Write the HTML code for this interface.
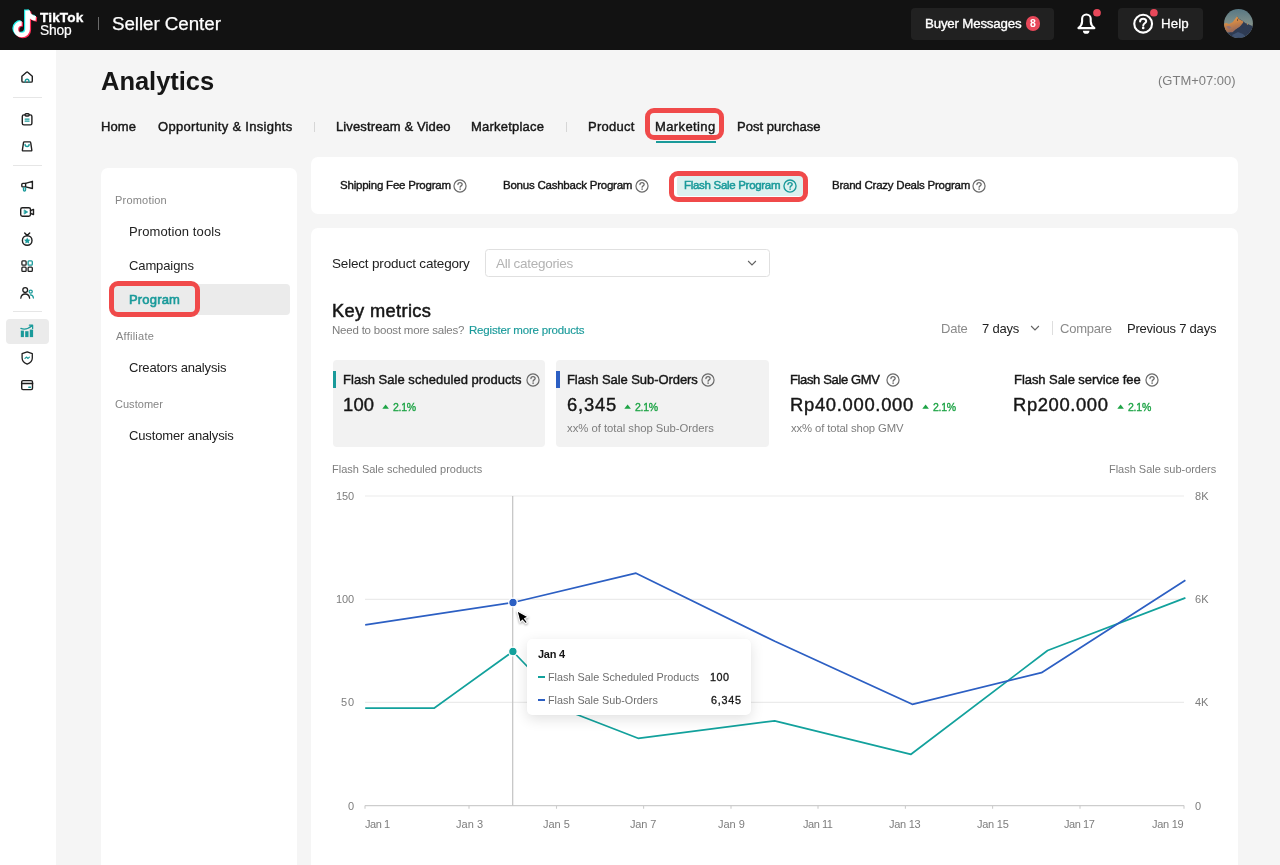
<!DOCTYPE html>
<html>
<head>
<meta charset="utf-8">
<title>Seller Center - Analytics</title>
<style>
*{box-sizing:border-box;margin:0;padding:0}
html,body{width:1280px;height:865px;overflow:hidden;background:#f5f5f5;font-family:"Liberation Sans",sans-serif;color:#161616}
.a{position:absolute}
.t{position:absolute;white-space:nowrap;line-height:1;will-change:transform}
.btn{position:absolute;background:#212121;border-radius:4px}
.red{position:absolute;border:5px solid #f04a4a;border-radius:9px}
.card{position:absolute;background:#fff;border-radius:7px}
</style>
</head>
<body>
<div class="a" style="left:0;top:0;width:1280px;height:50px;background:#121212"></div>
<svg class="a" style="left:12.2px;top:6.4px" width="32" height="36.27" viewBox="0 0 30 34"><g fill="none" stroke-width="4.4">
<path d="M14.6 4.2V21.7a5.5 5.5 0 1 1-5.5-5.5M14.6 4.2c.3 4 3.2 7 7.7 7.4" stroke="#25f4ee" transform="translate(-1.1,-.9)"/><path d="M14.6 4.2V21.7a5.5 5.5 0 1 1-5.5-5.5M14.6 4.2c.3 4 3.2 7 7.7 7.4" stroke="#fe2c55" transform="translate(1.1,.9)"/><path d="M14.6 4.2V21.7a5.5 5.5 0 1 1-5.5-5.5M14.6 4.2c.3 4 3.2 7 7.7 7.4" stroke="#fff"/></g></svg>
<div class="t" style="left:40.3px;top:10px;font-size:13.6px;line-height:15px;color:#fff;font-weight:bold;-webkit-text-stroke:0.35px #fff;letter-spacing:0.15px;">TikTok</div><div class="t" style="left:39.8px;top:23px;font-size:13.8px;line-height:15px;color:#fff;-webkit-text-stroke:0.2px #fff;letter-spacing:-0.22px;">Shop</div><div class="a" style="left:98px;top:16.8px;width:1px;height:13.2px;background:#6a6a6a"></div>
<div class="t" style="left:112.45px;top:13px;font-size:18.8px;line-height:21px;color:#fff;-webkit-text-stroke:0.25px #fff;letter-spacing:-0.06px;">Seller Center</div><div class="btn" style="left:911px;top:7.5px;width:143px;height:32px"></div>
<div class="t" style="left:925px;top:16px;font-size:13.3px;line-height:15px;color:#fff;-webkit-text-stroke:0.35px #fff;letter-spacing:-0.19px;">Buyer Messages</div><div class="a" style="left:1025.5px;top:16.4px;width:14.5px;height:14.5px;border-radius:7.25px;background:#e8485a"></div>
<div class="t" style="left:1029.88px;top:17px;font-size:10.5px;line-height:12px;color:#fff;font-weight:bold;">8</div><svg class="a" style="left:1070px;top:6px" width="36" height="34" viewBox="1070 6 36 34">
<path d="M1078.4 28.1C1080.9 26.2 1082.1 24.6 1082.1 21.6V18.8a4.3 4.3 0 0 1 8.6 0v2.8c0 3 1.2 4.6 3.7 6.5z" fill="none" stroke="#fff" stroke-width="2.1" stroke-linejoin="round"/>
<path d="M1082.9 30.7h6.6a3.3 3.1 0 0 1-6.6 0z" fill="#fff"/><circle cx="1097" cy="12.750" r="3.850" fill="#e8485a"/></svg>
<div class="btn" style="left:1118px;top:7.5px;width:85px;height:32px"></div>
<svg class="a" style="left:1130px;top:6px" width="32" height="32" viewBox="1130 6 32 32">
<circle cx="1143.150" cy="23.7" r="8.9" fill="none" stroke="#fff" stroke-width="2.1"/>
<path d="M1140.1 21.4c0-1.7 1.3-2.7 3.050-2.7s3.050 1 3.050 2.5c0 2.1-2.950 2.1-2.950 4.2" fill="none" stroke="#fff" stroke-width="2" stroke-linecap="round"/>
<circle cx="1143.2" cy="27.9" r="1.3" fill="#fff"/><circle cx="1153.9" cy="12.750" r="3.850" fill="#e8485a"/></svg>
<div class="t" style="left:1161px;top:16px;font-size:13.3px;line-height:15px;color:#fff;-webkit-text-stroke:0.3px #fff;letter-spacing:0.1px;">Help</div><svg class="a" style="left:1224.1px;top:8.9px" width="29" height="29" viewBox="0 0 29 29">
<defs><clipPath id="av"><circle cx="14.5" cy="14.5" r="14.4"/></clipPath>
<linearGradient id="sky" x1="0" y1="0" x2="0" y2="1"><stop offset="0" stop-color="#587884"/><stop offset=".55" stop-color="#83928b"/><stop offset="1" stop-color="#83928b"/></linearGradient>
<linearGradient id="mo" x1="0" y1="0" x2=".3" y2="1"><stop offset="0" stop-color="#f0a64e"/><stop offset=".5" stop-color="#cf8646"/><stop offset="1" stop-color="#94685c"/></linearGradient>
<filter id="bl" x="-10%" y="-10%" width="120%" height="120%"><feGaussianBlur stdDeviation=".45"/></filter></defs>
<g clip-path="url(#av)"><rect width="29" height="29" fill="url(#sky)"/><g filter="url(#bl)">
<path d="M12 10 13.1 7.3 15 9.8 18.8 11.9 21.5 14.2 23.4 14.8 26 16 29 17.2V29H3z" fill="#2e3a52"/>
<path d="M0 14.8 2.2 13.9 5 15 8.6 13.3 13.1 7.3 14.6 9.7 17 11.2 18.8 11.9 19.3 13.6 15.6 18 11.5 20.8 8.5 23.4 3 23.4 0 19z" fill="url(#mo)"/>
<path d="M13.5 9.6 14.2 10.2 13.9 12 13 11.8z" fill="#6b4630"/>
<path d="M23 14.4 23.9 14.5 23.7 16 22.9 15.6z" fill="#d99a5c"/>
<path d="M3 23.4 8.5 23.4 11.5 20.8 15.6 18 17.5 17 20 19 23 22 26 26 20 29H8z" fill="#2e3a52"/>
<path d="M8 26 14 23 19 25 22 28 10 29z" fill="#3f5272"/>
<path d="M2 17.5 5 17 7.5 18.5 5 20z" fill="#8d7078"/></g></g></svg>
<div class="a" style="left:0;top:50px;width:56px;height:815px;background:#fff"></div>
<svg class="a" style="left:19.3px;top:69px" width="16" height="16" viewBox="0 0 16 16" fill="none" stroke="#1f1f1f" stroke-width="1.4" stroke-linejoin="round" stroke-linecap="round"><path d="M2.9 7.3 7.5 3.3Q8.1 2.8 8.7 3.3l4.6 4v4.6q0 1.2-1.2 1.2H4.1q-1.2 0-1.2-1.2z"/><path d="M6.3 13.1v-1a1.8 1.8 0 0 1 3.6 0v1" stroke="#1a9a9a"/></svg>
<div class="a" style="left:13px;top:97.3px;width:29px;height:1px;background:#e6e6e6"></div>
<svg class="a" style="left:19.3px;top:112px" width="16" height="16" viewBox="0 0 16 16" fill="none" stroke="#1f1f1f" stroke-width="1.4" stroke-linejoin="round" stroke-linecap="round"><rect x="3.3" y="2.9" width="9.6" height="10" rx="1.6"/><rect x="6.1" y="1.7" width="4" height="2.3" rx=".9" fill="#fff"/><path d="M6.1 7h4M6.1 9.1h4" stroke="#1a9a9a" stroke-width="1.250"/></svg>
<svg class="a" style="left:19.3px;top:138px" width="16" height="16" viewBox="0 0 16 16" fill="none" stroke="#1f1f1f" stroke-width="1.4" stroke-linejoin="round" stroke-linecap="round"><path d="M5.4 3.9h5.4q.8 0 .9.8l1.1 7.3q.1.9-.8.9H4.2q-.9 0-.8-.9l1.1-7.3q.1-.8.9-.8z"/><path d="M6.1 6.5a2 2 0 0 0 4 0" stroke="#1a9a9a"/></svg>
<div class="a" style="left:13px;top:165px;width:29px;height:1px;background:#e6e6e6"></div>
<svg class="a" style="left:19.3px;top:177.5px" width="16" height="16" viewBox="0 0 16 16" fill="none" stroke="#1f1f1f" stroke-width="1.4" stroke-linejoin="round" stroke-linecap="round"><path d="M6.6 5.4l6.8-2.1v7.2L6.6 8.9z"/><path d="M6.6 5.4H3.8a1 1 0 0 0-1 1v1.5a1 1 0 0 0 1 1h2.8"/><path d="M4.5 9.7v2.4a1 1 0 0 0 2 0V9.7" stroke="#1a9a9a"/></svg>
<svg class="a" style="left:19.3px;top:204.1px" width="16" height="16" viewBox="0 0 16 16" fill="none" stroke="#1f1f1f" stroke-width="1.4" stroke-linejoin="round" stroke-linecap="round"><rect x="1.7" y="3.8" width="9.8" height="8.4" rx="1.7"/><path d="M11.5 6.7l3-1.3v5.2l-3-1.3"/><path d="M5.5 6.1 8.7 8l-3.2 1.9z" fill="#1a9a9a" stroke="#1a9a9a" stroke-width=".7"/></svg>
<svg class="a" style="left:19.3px;top:230.7px" width="16" height="16" viewBox="0 0 16 16" fill="none" stroke="#1f1f1f" stroke-width="1.4" stroke-linejoin="round" stroke-linecap="round"><circle cx="8.2" cy="9.5" r="4.8"/><path d="M5.7 1.9 8.2 4.6l2.5-2.7"/><path d="M8.2 6.5l1 2 2.2.3-1.6 1.550.4 2.2-2-1.050-2 1.050.4-2.2L5 8.8l2.2-.3z" fill="#1a9a9a" stroke="none"/></svg>
<svg class="a" style="left:19.3px;top:257.9px" width="16" height="16" viewBox="0 0 16 16" fill="none" stroke="#1f1f1f" stroke-width="1.3" stroke-linejoin="round" stroke-linecap="round"><rect x="2.9" y="2.9" width="4.2" height="4.2" rx=".9"/><rect x="9.1" y="2.9" width="4.2" height="4.2" rx=".9" stroke="#1a9a9a"/><rect x="2.9" y="9.1" width="4.2" height="4.2" rx=".9"/><rect x="9.1" y="9.1" width="4.2" height="4.2" rx=".9"/></svg>
<svg class="a" style="left:19.3px;top:284.5px" width="16" height="16" viewBox="0 0 16 16" fill="none" stroke="#1f1f1f" stroke-width="1.3" stroke-linejoin="round" stroke-linecap="round"><circle cx="6.2" cy="5.1" r="2.4"/><path d="M1.8 13.2c.3-2.8 2-4.2 4.4-4.2s4.1 1.4 4.4 4.2"/><circle cx="11.7" cy="6.6" r="1.6" stroke="#1a9a9a" stroke-width="1.250"/><path d="M11.3 9.9c1.7-.1 2.9 1 3.1 3.1" stroke="#1a9a9a" stroke-width="1.250"/></svg>
<div class="a" style="left:13px;top:311px;width:29px;height:1px;background:#e6e6e6"></div>
<div class="a" style="left:6px;top:319.1px;width:43px;height:24.6px;border-radius:4px;background:#ebebeb"></div>
<svg class="a" style="left:19.3px;top:323.3px" width="16" height="16" viewBox="0 0 16 16"><g fill="#1a9a9a"><rect x="1.8" y="7.6" width="3.1" height="6.5"/><rect x="6.2" y="8.2" width="3.3" height="5.9"/><rect x="10.8" y="6.6" width="3.3" height="7.5"/></g><path d="M1.9 5.4C5.5 7 9.5 5.8 13.2 2.5M10.4 2.2h3.2v3.2" fill="none" stroke="#1a9a9a" stroke-width="1.3" stroke-linecap="round" stroke-linejoin="round"/></svg>
<svg class="a" style="left:19.3px;top:350px" width="16" height="16" viewBox="0 0 16 16" fill="none" stroke="#1f1f1f" stroke-width="1.3" stroke-linejoin="round" stroke-linecap="round"><path d="M8.2 1.9l5.1 1.7v4.5c0 3-2.2 4.9-5.1 6.1-2.9-1.2-5.1-3.1-5.1-6.1V3.6z"/><path d="M6 8.4 7.4 7.1l1.6 1.3 1.4-1.3" stroke="#1a9a9a" stroke-width="1.250"/></svg>
<svg class="a" style="left:19.3px;top:377px" width="16" height="16" viewBox="0 0 16 16" fill="none" stroke="#1f1f1f" stroke-width="1.4" stroke-linejoin="round" stroke-linecap="round"><rect x="2.7" y="3.6" width="10.8" height="9" rx="1.3"/><path d="M2.7 6.5h10.8" stroke-width="1.7"/><path d="M9.8 10.3h1.7" stroke="#1a9a9a" stroke-width="1.4"/></svg>
<div class="t" style="left:101px;top:67px;font-size:25.5px;line-height:28px;color:#161616;font-weight:bold;letter-spacing:-0.03px;">Analytics</div><div class="t" style="left:1158px;top:73px;font-size:13px;line-height:15px;color:#7d7d7d;">(GTM+07:00)</div><div class="t" style="left:101px;top:119px;font-size:13px;line-height:15px;color:#161616;-webkit-text-stroke:0.42px #161616;letter-spacing:0.08px;">Home</div><div class="t" style="left:157.75px;top:119px;font-size:13px;line-height:15px;color:#161616;-webkit-text-stroke:0.42px #161616;letter-spacing:0.3px;">Opportunity &amp; Insights</div><div class="a" style="left:314px;top:122px;width:1px;height:10px;background:#d6d6d6"></div>
<div class="t" style="left:335.75px;top:119px;font-size:13px;line-height:15px;color:#161616;-webkit-text-stroke:0.42px #161616;letter-spacing:0.12px;">Livestream &amp; Video</div><div class="t" style="left:471.25px;top:119px;font-size:13px;line-height:15px;color:#161616;-webkit-text-stroke:0.42px #161616;letter-spacing:0.22px;">Marketplace</div><div class="a" style="left:566px;top:122px;width:1px;height:10px;background:#d6d6d6"></div>
<div class="t" style="left:587.75px;top:119px;font-size:13px;line-height:15px;color:#161616;-webkit-text-stroke:0.42px #161616;letter-spacing:0.27px;">Product</div><div class="t" style="left:655.45px;top:119px;font-size:13px;line-height:15px;color:#161616;-webkit-text-stroke:0.42px #161616;letter-spacing:0.38px;">Marketing</div><div class="t" style="left:736.85px;top:119px;font-size:13px;line-height:15px;color:#161616;-webkit-text-stroke:0.42px #161616;letter-spacing:0.03px;">Post purchase</div><div class="a" style="left:656px;top:141px;width:60px;height:2px;background:#1a9a9a"></div>
<div class="red" style="left:644.9px;top:108.2px;width:79.1px;height:31.5px"></div>
<div class="card" style="left:101.3px;top:167.7px;width:196px;height:720px"></div>
<div class="t" style="left:114.6px;top:194px;font-size:11px;line-height:12px;color:#858585;letter-spacing:0.2px;">Promotion</div><div class="t" style="left:129px;top:224px;font-size:13px;line-height:15px;color:#222;letter-spacing:0.1px;">Promotion tools</div><div class="t" style="left:129.25px;top:258px;font-size:13px;line-height:15px;color:#222;letter-spacing:-0.11px;">Campaigns</div><div class="a" style="left:110px;top:283.7px;width:180px;height:31.5px;border-radius:4px;background:#ebebeb"></div>
<div class="t" style="left:129.05px;top:292px;font-size:13px;line-height:15px;color:#1a9a9a;-webkit-text-stroke:0.6px #1a9a9a;letter-spacing:0.18px;">Program</div><div class="red" style="left:109.3px;top:281px;width:90.5px;height:35.5px"></div>
<div class="t" style="left:115.6px;top:330px;font-size:11px;line-height:12px;color:#858585;letter-spacing:0.24px;">Affiliate</div><div class="t" style="left:129.25px;top:360px;font-size:13px;line-height:15px;color:#222;letter-spacing:-0.19px;">Creators analysis</div><div class="t" style="left:115.1px;top:398px;font-size:11px;line-height:12px;color:#858585;letter-spacing:0.03px;">Customer</div><div class="t" style="left:129.25px;top:428px;font-size:13px;line-height:15px;color:#222;letter-spacing:-0.13px;">Customer analysis</div><div class="card" style="left:311.3px;top:156.5px;width:926.5px;height:57.6px"></div>
<div class="t" style="left:339.75px;top:179px;font-size:11.5px;line-height:12px;color:#161616;-webkit-text-stroke:0.38px #161616;letter-spacing:-0.21px;">Shipping Fee Program</div><svg class="a" style="left:452.1px;top:177.5px" width="16" height="16" viewBox="0 0 16 16" fill="none" stroke="#6a6a6a" stroke-width="1.2" stroke-linecap="round"><circle cx="8" cy="8" r="6.05"/><path d="M5.950 6.6c0-1.2.9-2 2.1-2s2.1.75 2.1 1.9c0 1.4-2.050 1.4-2.050 2.7" stroke-width="1.30"/><circle cx="8.1" cy="11.150" r=".8" fill="#6a6a6a" stroke="none"/></svg>
<div class="t" style="left:502.5px;top:179px;font-size:11.5px;line-height:12px;color:#161616;-webkit-text-stroke:0.38px #161616;letter-spacing:-0.23px;">Bonus Cashback Program</div><svg class="a" style="left:633.8px;top:177.5px" width="16" height="16" viewBox="0 0 16 16" fill="none" stroke="#6a6a6a" stroke-width="1.2" stroke-linecap="round"><circle cx="8" cy="8" r="6.05"/><path d="M5.950 6.6c0-1.2.9-2 2.1-2s2.1.75 2.1 1.9c0 1.4-2.050 1.4-2.050 2.7" stroke-width="1.30"/><circle cx="8.1" cy="11.150" r=".8" fill="#6a6a6a" stroke="none"/></svg>
<div class="a" style="left:676.5px;top:175.7px;width:126.5px;height:20.8px;background:#dcf1ef;border-radius:3px"></div>
<div class="t" style="left:683.95px;top:179px;font-size:11.5px;line-height:12px;color:#1a9a9a;-webkit-text-stroke:0.5px #1a9a9a;letter-spacing:-0.3px;">Flash Sale Program</div><svg class="a" style="left:781.5px;top:177.5px" width="16" height="16" viewBox="0 0 16 16" fill="none" stroke="#1a9a9a" stroke-width="1.35" stroke-linecap="round"><circle cx="8" cy="8" r="6.05"/><path d="M5.950 6.6c0-1.2.9-2 2.1-2s2.1.75 2.1 1.9c0 1.4-2.050 1.4-2.050 2.7" stroke-width="1.45"/><circle cx="8.1" cy="11.150" r=".8" fill="#1a9a9a" stroke="none"/></svg>
<div class="red" style="left:669.4px;top:170.7px;width:138.4px;height:30.9px"></div>
<div class="t" style="left:831.85px;top:179px;font-size:11.5px;line-height:12px;color:#161616;-webkit-text-stroke:0.38px #161616;letter-spacing:-0.23px;">Brand Crazy Deals Program</div><svg class="a" style="left:971.4px;top:177.5px" width="16" height="16" viewBox="0 0 16 16" fill="none" stroke="#6a6a6a" stroke-width="1.2" stroke-linecap="round"><circle cx="8" cy="8" r="6.05"/><path d="M5.950 6.6c0-1.2.9-2 2.1-2s2.1.75 2.1 1.9c0 1.4-2.050 1.4-2.050 2.7" stroke-width="1.30"/><circle cx="8.1" cy="11.150" r=".8" fill="#6a6a6a" stroke="none"/></svg>
<div class="card" style="left:311.3px;top:227.6px;width:926.5px;height:660px"></div>
<div class="t" style="left:332.25px;top:256px;font-size:13.5px;line-height:15px;color:#222;letter-spacing:-0.18px;">Select product category</div><div class="a" style="left:485px;top:249px;width:285px;height:28px;border:1px solid #e0e0e0;border-radius:3.5px;background:#fff"></div>
<div class="t" style="left:496.25px;top:256px;font-size:13.5px;line-height:15px;color:#b3b3b3;letter-spacing:-0.29px;">All categories</div><svg class="a" style="left:746.2px;top:259px" width="12" height="8" viewBox="0 0 12 8" fill="none" stroke="#636363" stroke-width="1.15" stroke-linejoin="miter"><path d="M2.1 2 6 5.9 9.9 2"/></svg>
<div class="t" style="left:332px;top:300px;font-size:18.3px;line-height:21px;color:#161616;-webkit-text-stroke:0.5px #161616;letter-spacing:0.35px;">Key metrics</div><div class="t" style="left:332px;top:324px;font-size:11.5px;line-height:12px;color:#7d7d7d;letter-spacing:-0.21px;">Need to boost more sales?</div><div class="t" style="left:468.5px;top:324px;font-size:11.5px;line-height:12px;color:#1a9a9a;-webkit-text-stroke:0.15px #1a9a9a;letter-spacing:-0.19px;">Register more products</div><div class="t" style="left:940.7px;top:321px;font-size:13px;line-height:15px;color:#8a8a8a;letter-spacing:-0.23px;">Date</div><div class="t" style="left:982.45px;top:321px;font-size:13px;line-height:15px;color:#222;letter-spacing:-0.22px;">7 days</div><svg class="a" style="left:1028.9px;top:324.4px" width="12" height="8" viewBox="0 0 12 8" fill="none" stroke="#636363" stroke-width="1.15" stroke-linejoin="miter"><path d="M2.1 2 6 5.9 9.9 2"/></svg>
<div class="a" style="left:1051.8px;top:320.5px;width:1px;height:14px;background:#dedede"></div>
<div class="t" style="left:1060.05px;top:321px;font-size:13px;line-height:15px;color:#8a8a8a;letter-spacing:-0.24px;">Compare</div><div class="t" style="left:1126.6px;top:321px;font-size:13px;line-height:15px;color:#222;letter-spacing:-0.22px;">Previous 7 days</div><div class="a" style="left:332.7px;top:360px;width:212.8px;height:87.2px;background:#f2f2f2;border-radius:4px"></div>
<div class="a" style="left:556px;top:360px;width:213px;height:87.2px;background:#f2f2f2;border-radius:4px"></div>
<div class="a" style="left:332.7px;top:371px;width:3.6px;height:17px;background:#1a9a9a"></div>
<div class="a" style="left:556.1px;top:371px;width:3.7px;height:17px;background:#2c5fc3"></div>
<div class="t" style="left:343px;top:372px;font-size:13px;line-height:15px;color:#161616;-webkit-text-stroke:0.42px #161616;letter-spacing:0.03px;">Flash Sale scheduled products</div><svg class="a" style="left:524.8px;top:372.1px" width="16" height="16" viewBox="0 0 16 16" fill="none" stroke="#6a6a6a" stroke-width="1.2" stroke-linecap="round"><circle cx="8" cy="8" r="6.05"/><path d="M5.950 6.6c0-1.2.9-2 2.1-2s2.1.75 2.1 1.9c0 1.4-2.050 1.4-2.050 2.7" stroke-width="1.30"/><circle cx="8.1" cy="11.150" r=".8" fill="#6a6a6a" stroke="none"/></svg>
<div class="t" style="left:342.85px;top:394px;font-size:18.4px;line-height:21px;color:#161616;-webkit-text-stroke:0.4px #161616;letter-spacing:0.2px;">100</div><svg class="a" style="left:382px;top:404.1px" width="8" height="6" viewBox="0 0 8 6"><path d="M.3 4.8 3.6.5 6.9 4.8z" fill="#1ea446"/></svg>
<div class="t" style="left:393px;top:401px;font-size:10.5px;line-height:12px;color:#1ea446;-webkit-text-stroke:0.35px #1ea446;letter-spacing:-0.28px;">2.1%</div><div class="t" style="left:566.85px;top:372px;font-size:13px;line-height:15px;color:#161616;-webkit-text-stroke:0.42px #161616;letter-spacing:-0.07px;">Flash Sale Sub-Orders</div><svg class="a" style="left:700.2px;top:372.1px" width="16" height="16" viewBox="0 0 16 16" fill="none" stroke="#6a6a6a" stroke-width="1.2" stroke-linecap="round"><circle cx="8" cy="8" r="6.05"/><path d="M5.950 6.6c0-1.2.9-2 2.1-2s2.1.75 2.1 1.9c0 1.4-2.050 1.4-2.050 2.7" stroke-width="1.30"/><circle cx="8.1" cy="11.150" r=".8" fill="#6a6a6a" stroke="none"/></svg>
<div class="t" style="left:566.85px;top:394px;font-size:18.4px;line-height:21px;color:#161616;-webkit-text-stroke:0.4px #161616;letter-spacing:0.8px;">6,345</div><svg class="a" style="left:624.2px;top:404.1px" width="8" height="6" viewBox="0 0 8 6"><path d="M.3 4.8 3.6.5 6.9 4.8z" fill="#1ea446"/></svg>
<div class="t" style="left:635.25px;top:401px;font-size:10.5px;line-height:12px;color:#1ea446;-webkit-text-stroke:0.35px #1ea446;letter-spacing:-0.27px;">2.1%</div><div class="t" style="left:567.05px;top:422px;font-size:11.3px;line-height:12px;color:#7d7d7d;letter-spacing:-0.02px;">xx% of total shop Sub-Orders</div><div class="t" style="left:790.45px;top:372px;font-size:13px;line-height:15px;color:#161616;-webkit-text-stroke:0.42px #161616;letter-spacing:-0.36px;">Flash Sale GMV</div><svg class="a" style="left:884.6px;top:372.1px" width="16" height="16" viewBox="0 0 16 16" fill="none" stroke="#6a6a6a" stroke-width="1.2" stroke-linecap="round"><circle cx="8" cy="8" r="6.05"/><path d="M5.950 6.6c0-1.2.9-2 2.1-2s2.1.75 2.1 1.9c0 1.4-2.050 1.4-2.050 2.7" stroke-width="1.30"/><circle cx="8.1" cy="11.150" r=".8" fill="#6a6a6a" stroke="none"/></svg>
<div class="t" style="left:789.95px;top:394px;font-size:18.4px;line-height:21px;color:#161616;-webkit-text-stroke:0.4px #161616;letter-spacing:0.7px;">Rp40.000.000</div><svg class="a" style="left:921.6px;top:404.1px" width="8" height="6" viewBox="0 0 8 6"><path d="M.3 4.8 3.6.5 6.9 4.8z" fill="#1ea446"/></svg>
<div class="t" style="left:932.75px;top:401px;font-size:10.5px;line-height:12px;color:#1ea446;-webkit-text-stroke:0.35px #1ea446;letter-spacing:-0.27px;">2.1%</div><div class="t" style="left:790.95px;top:422px;font-size:11.3px;line-height:12px;color:#7d7d7d;letter-spacing:-0.12px;">xx% of total shop GMV</div><div class="t" style="left:1013.95px;top:372px;font-size:13px;line-height:15px;color:#161616;-webkit-text-stroke:0.42px #161616;letter-spacing:-0.06px;">Flash Sale service fee</div><svg class="a" style="left:1144px;top:372.1px" width="16" height="16" viewBox="0 0 16 16" fill="none" stroke="#6a6a6a" stroke-width="1.2" stroke-linecap="round"><circle cx="8" cy="8" r="6.05"/><path d="M5.950 6.6c0-1.2.9-2 2.1-2s2.1.75 2.1 1.9c0 1.4-2.050 1.4-2.050 2.7" stroke-width="1.30"/><circle cx="8.1" cy="11.150" r=".8" fill="#6a6a6a" stroke="none"/></svg>
<div class="t" style="left:1013.45px;top:394px;font-size:18.4px;line-height:21px;color:#161616;-webkit-text-stroke:0.4px #161616;letter-spacing:0.61px;">Rp200.000</div><svg class="a" style="left:1116.6px;top:404.1px" width="8" height="6" viewBox="0 0 8 6"><path d="M.3 4.8 3.6.5 6.9 4.8z" fill="#1ea446"/></svg>
<div class="t" style="left:1127.75px;top:401px;font-size:10.5px;line-height:12px;color:#1ea446;-webkit-text-stroke:0.35px #1ea446;letter-spacing:-0.23px;">2.1%</div><div class="t" style="left:332px;top:463px;font-size:11px;line-height:12px;color:#7d7d7d;letter-spacing:-0.01px;">Flash Sale scheduled products</div><div class="t" style="left:1109.4px;top:463px;font-size:11px;line-height:12px;color:#7d7d7d;letter-spacing:-0.02px;">Flash Sale sub-orders</div><svg class="a" style="left:0;top:440px" width="1280" height="425" viewBox="0 440 1280 425" fill="none">
<path d="M365 496H1184" stroke="#ebebeb" stroke-width="1.2"/>
<path d="M365 599.3H1184" stroke="#ebebeb" stroke-width="1.2"/>
<path d="M365 702.4H1184" stroke="#ebebeb" stroke-width="1.2"/>
<path d="M365 805.6H1184" stroke="#cdcdcd" stroke-width="1.2"/>
<path d="M365 805.6v3.2M469 805.6v3.2M556.5 805.6v3.2M643.6 805.6v3.2M731 805.6v3.2M818 805.6v3.2M905.4 805.6v3.2M992.6 805.6v3.2M1080 805.6v3.2M1184 805.6v3.2" stroke="#cdcdcd" stroke-width="1.1"/>
<path d="M512.7 496V805.6" stroke="#c2c2c2" stroke-width="1.2"/>
<path d="M365.2 708.2L434 708.2L512.9 651.5L571.6 712.5L638.1 738.3L774.7 720.8L911 754.3L1047.6 650.5L1185.4 597.9" stroke="#12a19c" stroke-width="1.7" stroke-linejoin="round"/>
<path d="M365.2 624.9L513 602.5L636 573.2L774.8 641.3L912.3 704.3L1041.5 672.7L1185.4 580.2" stroke="#2c5fc3" stroke-width="1.7" stroke-linejoin="round"/>
<circle cx="513" cy="602.5" r="4.3" fill="#2c5fc3" stroke="#fff" stroke-width="1.3"/>
<circle cx="512.9" cy="651.5" r="4.3" fill="#12a19c" stroke="#fff" stroke-width="1.3"/>
</svg>
<div class="t" style="left:336.25px;top:490px;font-size:11px;line-height:12px;color:#7d7d7d;letter-spacing:-0.18px;">150</div><div class="t" style="left:336.25px;top:593px;font-size:11px;line-height:12px;color:#7d7d7d;letter-spacing:-0.18px;">100</div><div class="t" style="left:341.35px;top:696px;font-size:11px;line-height:12px;color:#7d7d7d;letter-spacing:0.8px;">50</div><div class="t" style="left:347.72px;top:800px;font-size:11px;line-height:12px;color:#7d7d7d;">0</div><div class="t" style="left:1194.7px;top:490px;font-size:11px;line-height:12px;color:#7d7d7d;letter-spacing:0.05px;">8K</div><div class="t" style="left:1194.7px;top:593px;font-size:11px;line-height:12px;color:#7d7d7d;letter-spacing:0.05px;">6K</div><div class="t" style="left:1194.95px;top:696px;font-size:11px;line-height:12px;color:#7d7d7d;letter-spacing:-0.2px;">4K</div><div class="t" style="left:1195.12px;top:800px;font-size:11px;line-height:12px;color:#7d7d7d;">0</div><div class="t" style="left:364.75px;top:818px;font-size:11px;line-height:12px;color:#7d7d7d;letter-spacing:-0.44px;">Jan 1</div><div class="t" style="left:455.55px;top:818px;font-size:11px;line-height:12px;color:#7d7d7d;letter-spacing:0.06px;">Jan 3</div><div class="t" style="left:542.75px;top:818px;font-size:11px;line-height:12px;color:#7d7d7d;letter-spacing:-0.01px;">Jan 5</div><div class="t" style="left:630.45px;top:818px;font-size:11px;line-height:12px;color:#7d7d7d;letter-spacing:-0.16px;">Jan 7</div><div class="t" style="left:717.55px;top:818px;font-size:11px;line-height:12px;color:#7d7d7d;letter-spacing:-0.01px;">Jan 9</div><div class="t" style="left:803.02px;top:818px;font-size:11px;line-height:12px;color:#7d7d7d;letter-spacing:-0.45px;">Jan 11</div><div class="t" style="left:889.35px;top:818px;font-size:11px;line-height:12px;color:#7d7d7d;letter-spacing:-0.29px;">Jan 13</div><div class="t" style="left:976.75px;top:818px;font-size:11px;line-height:12px;color:#7d7d7d;letter-spacing:-0.25px;">Jan 15</div><div class="t" style="left:1064.35px;top:818px;font-size:11px;line-height:12px;color:#7d7d7d;letter-spacing:-0.45px;">Jan 17</div><div class="t" style="left:1152.45px;top:818px;font-size:11px;line-height:12px;color:#7d7d7d;letter-spacing:-0.27px;">Jan 19</div><div class="a" style="left:527.1px;top:639px;width:224.2px;height:75.8px;background:#fff;border-radius:5px;box-shadow:0 4px 14px rgba(0,0,0,.12),0 0 2px rgba(0,0,0,.04)"></div>
<div class="t" style="left:537.95px;top:648px;font-size:11px;line-height:12px;color:#161616;font-weight:bold;letter-spacing:-0.26px;">Jan 4</div><div class="a" style="left:537.5px;top:676.2px;width:7.2px;height:2px;background:#12a19c"></div>
<div class="t" style="left:547.6px;top:671px;font-size:10.8px;line-height:12px;color:#6e6e6e;letter-spacing:0.02px;">Flash Sale Scheduled Products</div><div class="t" style="left:709.85px;top:671px;font-size:10.8px;line-height:12px;color:#161616;-webkit-text-stroke:0.32px #161616;letter-spacing:0.45px;">100</div><div class="a" style="left:537.5px;top:699.4px;width:7.2px;height:2px;background:#2c5fc3"></div>
<div class="t" style="left:547.6px;top:694px;font-size:10.8px;line-height:12px;color:#6e6e6e;">Flash Sale Sub-Orders</div><div class="t" style="left:710.6px;top:694px;font-size:10.8px;line-height:12px;color:#161616;-webkit-text-stroke:0.32px #161616;letter-spacing:0.76px;">6,345</div><svg class="a" style="left:510px;top:605px" width="26" height="26" viewBox="510 605 26 26"><path d="M517 610.8l3.1 11.9 2.3-2.5 3.3 3.5 1.8-1.4-2.9-3.7 3.7-1.7z" fill="#000" stroke="#fff" stroke-width="1.1" stroke-linejoin="round" style="filter:drop-shadow(0 1px 1.2px rgba(0,0,0,.35))"/></svg>
</body>
</html>
